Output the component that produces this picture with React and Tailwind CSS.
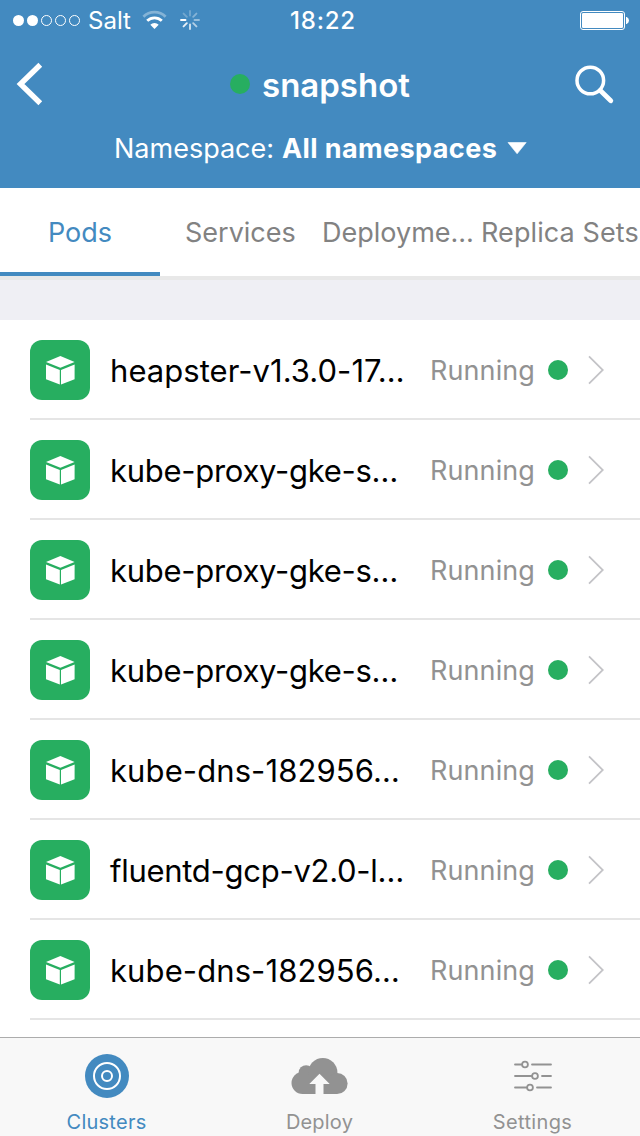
import React from "react";

const pods = [
  { name: "heapster-v1.3.0-17…", tracking: "tracking-[0.05px]" },
  { name: "kube-proxy-gke-s…", tracking: "tracking-[-0.28px]" },
  { name: "kube-proxy-gke-s…", tracking: "tracking-[-0.28px]" },
  { name: "kube-proxy-gke-s…", tracking: "tracking-[-0.28px]" },
  { name: "kube-dns-182956…", tracking: "tracking-[0.1px]" },
  { name: "fluentd-gcp-v2.0-l…", tracking: "tracking-[-0.28px]" },
  { name: "kube-dns-182956…", tracking: "tracking-[0.1px]" },
];

function StatusBar() {
  return (
    <div className="flex h-10 items-center">
      <svg className="ml-3 h-10 w-[70px] shrink-0" viewBox="12 0 70 40" fill="none" stroke="white">
        <circle cx="18.5" cy="20.5" r="5.5" fill="white" stroke="none" />
        <circle cx="32.5" cy="20.5" r="5.5" fill="white" stroke="none" />
        <circle cx="46.5" cy="20.5" r="5" />
        <circle cx="60.5" cy="20.5" r="5" />
        <circle cx="74.5" cy="20.5" r="5" />
      </svg>
      <span className="ml-[6px] w-[44px] shrink-0 whitespace-nowrap pt-0.5 text-[24px] leading-10">Salt</span>
      <svg className="ml-[10px] h-10 w-[26px] shrink-0" viewBox="142 0 26 40" fill="none" stroke="white">
        <path d="M143.4 16.7A15.8 15.8 0 0 1 165.6 16.7" strokeWidth="2.8" opacity="0.35" />
        <path d="M147.2 20.8A10.4 10.4 0 0 1 161.8 20.8" strokeWidth="2.8" />
        <path d="M150.3 24.8A6 6 0 0 1 158.7 24.8L154.5 29Z" fill="white" stroke="none" />
      </svg>
      <svg className="ml-3 h-10 w-5 shrink-0" viewBox="180 0 20 40" stroke="white" strokeWidth="1.9" strokeLinecap="round">
        <path d="M190 15.5V11" opacity="0.25" />
        <path d="M193.2 16.8L196.4 13.6" opacity="0.35" />
        <path d="M194.5 20H199" opacity="0.45" />
        <path d="M193.2 23.2L196.4 26.4" opacity="0.6" />
        <path d="M190 24.5V29" opacity="0.75" />
        <path d="M186.8 23.2L183.6 26.4" opacity="0.88" />
        <path d="M185.5 20H181" />
        <path d="M186.8 16.8L183.6 13.6" opacity="0.25" />
      </svg>
      <span className="ml-[90px] w-[80px] shrink-0 whitespace-nowrap pt-0.5 text-[24px] font-medium leading-10 tracking-[0.8px]">18:22</span>
      <svg className="ml-auto h-10 w-[60px] shrink-0" viewBox="580 0 60 40" fill="white">
        <rect x="580.5" y="11.5" width="44" height="18" rx="2.5" fill="none" stroke="white" />
        <rect x="582" y="13" width="41" height="15" rx="1.2" />
        <path d="M626 17h.8q2.2 1.3 2.2 3.5t-2.2 3.5h-.8z" />
      </svg>
    </div>
  );
}

function Header() {
  return (
    <header className="h-[188px] shrink-0 bg-[#438ac0] text-white">
      <StatusBar />
      <div className="flex h-[88px] items-center">
        <svg className="h-[88px] w-12 shrink-0" viewBox="0 40 48 88" fill="none" stroke="white" strokeWidth="5.4">
          <path d="M40.3 64.8L20.5 84L40.3 103.2" />
        </svg>
        <span className="ml-[182px] size-5 shrink-0 rounded-full bg-[#27ae60]" />
        <h1 className="ml-[12px] w-[160px] shrink-0 whitespace-nowrap pt-0.5 text-[33px] font-semibold leading-[44px]">snapshot</h1>
        <svg className="ml-auto h-[88px] w-[70px] shrink-0" viewBox="570 40 70 88" fill="none" stroke="white">
          <circle cx="590.3" cy="80.5" r="13.3" strokeWidth="3.5" />
          <path d="M600.3 90.5L610.8 100.8" strokeWidth="4.8" strokeLinecap="round" />
        </svg>
      </div>
      <div className="flex h-10 items-center text-[27px] leading-10">
        <span className="ml-[114px] w-[168px] shrink-0 whitespace-nowrap pt-px">Namespace:</span>
        <span className="w-[225px] shrink-0 whitespace-nowrap pt-px font-bold tracking-[0.4px]">All namespaces</span>
        <svg className="h-3 w-5" viewBox="0 0 20 12">
          <path d="M1 .5H19.2L10.1 11.8Z" fill="white" stroke="white" strokeWidth=".6" strokeLinejoin="round" />
        </svg>
      </div>
    </header>
  );
}

function Tabs() {
  return (
    <nav className="flex h-[92px] shrink-0 border-b-4 border-[#e8e8e8] text-[27px] leading-[89px] text-[#828282]">
      <div className="h-[88px] w-40 border-b-4 border-[#438ac0] pl-[48px] text-[#438ac0]">
        <span className="whitespace-nowrap">Pods</span>
      </div>
      <div className="w-40 pl-[25px]">
        <span className="whitespace-nowrap">Services</span>
      </div>
      <div className="w-40 pl-[2px]">
        <span className="whitespace-nowrap">Deployme…</span>
      </div>
      <div className="w-40 pl-[1px]">
        <span className="whitespace-nowrap tracking-[0.1px]">Replica Sets</span>
      </div>
    </nav>
  );
}

function PodRow({ pod }) {
  return (
    <li className="ml-[30px] flex h-[100px] items-center border-b-2 border-[#e5e5e5] pt-0.5">
      <div className="size-[60px] shrink-0 rounded-[12px] bg-[#27ae60]">
        <svg className="size-[60px]" viewBox="0 0 60 60" fill="white">
          <path d="M30.4 16L44.6 22L30.4 27.7L16 22Z" />
          <path d="M16 24.6L29.8 30.1V44.6L16 39.2Z" />
          <path d="M44.6 24.6L31 30.1V44.6L44.6 39.2Z" />
        </svg>
      </div>
      <span className={"ml-5 w-[320px] shrink-0 whitespace-nowrap pt-0.5 text-[31px] leading-[60px] text-black " + pod.tracking}>{pod.name}</span>
      <span className="w-[118px] shrink-0 whitespace-nowrap pt-px text-[27px] leading-[60px] tracking-[0.1px] text-[#929292]">Running</span>
      <span className="size-5 shrink-0 rounded-full bg-[#27ae60]" />
      <svg className="ml-5 h-[30px] w-4 shrink-0" viewBox="0 0 16 30" fill="none" stroke="#c3c3c7" strokeWidth="1.8">
        <path d="M1 1.4L14.8 15L1 28.6" />
      </svg>
    </li>
  );
}

function TabBar() {
  return (
    <footer className="flex h-[99px] shrink-0 border-t border-[#acacac] bg-[#f8f8f8] text-[20px] leading-6 text-[#929292]">
      <div className="flex w-[213px] flex-col items-center text-[#438ac0]">
        <svg className="mt-4 h-11 w-[44px]" viewBox="0 0 44 44" fill="none" stroke="white" strokeWidth="2">
          <circle cx="22" cy="22" r="22" fill="#438ac0" stroke="none" />
          <circle cx="22" cy="22" r="13" />
          <circle cx="22" cy="22" r="5" />
        </svg>
        <span className="mt-3 whitespace-nowrap tracking-[0.25px]">Clusters</span>
      </div>
      <div className="flex w-[213px] flex-col items-center">
        <svg className="mt-4 h-11 w-[58px]" viewBox="290.5 1054 58 44" fill="#929292">
          <circle cx="302" cy="1083" r="11" />
          <circle cx="305.6" cy="1072.6" r="7.4" />
          <circle cx="322.3" cy="1072.6" r="14.6" />
          <circle cx="336.6" cy="1083.5" r="10.5" />
          <rect x="302" y="1076" width="34.6" height="18" />
          <path d="M319 1073.7L329.2 1084H323V1095H315V1084H308.8Z" fill="#f8f8f8" />
        </svg>
        <span className="mt-3 whitespace-nowrap tracking-[0.2px]">Deploy</span>
      </div>
      <div className="flex w-[213px] flex-col items-center">
        <svg className="mt-4 h-11 w-10" viewBox="513 1054 40 44" fill="none" stroke="#929292" strokeWidth="1.8" strokeLinecap="round">
          <path d="M515 1064.5H521.5M532 1064.5H551M515 1076H531.5M542 1076H551M515 1087.5H526.5M537 1087.5H551" />
          <circle cx="525" cy="1064.5" r="2.9" />
          <circle cx="535" cy="1076" r="2.9" />
          <circle cx="530" cy="1087.5" r="2.9" />
        </svg>
        <span className="mt-3 whitespace-nowrap tracking-[0.35px]">Settings</span>
      </div>
    </footer>
  );
}

export default function App() {
  return (
    <div className="flex h-[1136px] w-[640px] flex-col overflow-hidden bg-white font-[Inter,sans-serif]">
      <Header />
      <Tabs />
      <div className="h-10 shrink-0 bg-[#efeff4]" />
      <ul className="min-h-0 flex-1 overflow-hidden">
        {pods.map((pod, i) => (
          <PodRow key={i} pod={pod} />
        ))}
      </ul>
      <TabBar />
    </div>
  );
}
